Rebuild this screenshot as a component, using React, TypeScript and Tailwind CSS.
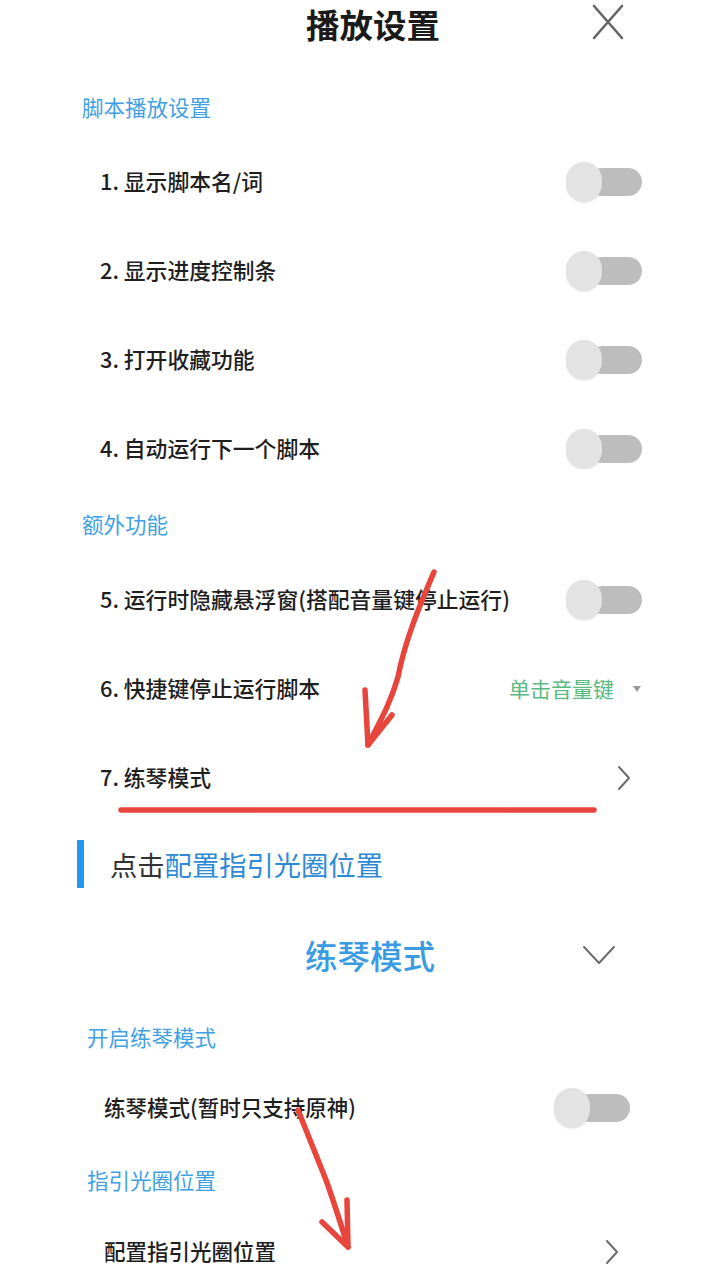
import React from "react";

const FONT = { fontFamily: '"Noto Sans CJK SC", "Noto Sans", sans-serif' };

function Toggle() {
  return (
    <div className="relative h-[42px] w-[76px]">
      <div className="absolute left-[22px] top-[7px] h-[28px] w-[54px] rounded-full bg-[#bdbdbd]" />
      <div className="absolute left-0 top-[1px] h-[40px] w-[36px] rounded-full bg-[#e3e3e3] shadow-[0_1px_2px_rgba(0,0,0,0.08)]" />
    </div>
  );
}

function ChevronRight() {
  return (
    <svg width="16" height="28" viewBox="0 0 16 28" fill="none">
      <path d="M3 3 L13 14 L3 25" stroke="#6b6b6b" strokeWidth="2" strokeLinecap="round" strokeLinejoin="round" />
    </svg>
  );
}

function SectionLabel({ children, pl }: { children: React.ReactNode; pl: string }) {
  return (
    <div className={`flex h-[40px] items-center text-[21.5px] text-[#3fa1e3] ${pl}`}>{children}</div>
  );
}

function Row({
  children,
  right,
  pl,
  pr,
  size = "text-[21.8px]",
}: {
  children: React.ReactNode;
  right: React.ReactNode;
  pl: string;
  pr: string;
  size?: string;
}) {
  return (
    <div className={`flex h-[89px] items-center justify-between ${pl} ${pr}`}>
      <div className={`${size} font-medium text-[#1e1e1e] whitespace-nowrap`}>{children}</div>
      {right}
    </div>
  );
}

export default function App() {
  return (
    <div className="relative h-[1280px] w-[720px] overflow-hidden bg-white" style={FONT}>
      {/* Header */}
      <div className="relative flex h-[46px] items-center justify-center pt-[2px]">
        <div className="ml-[26px] text-[33.5px] font-bold leading-[42px] text-[#1a1a1a]">播放设置</div>
        <svg className="absolute left-[590px] top-[4px]" width="36" height="36" viewBox="0 0 36 36" fill="none">
          <path d="M4 2 L32 34 M32 2 L4 34" stroke="#666" strokeWidth="2.6" strokeLinecap="round" />
        </svg>
      </div>

      <div className="mt-[41px]">
        <SectionLabel pl="pl-[82px]">脚本播放设置</SectionLabel>
      </div>
      <div className="mt-[10px]">
        <Row pl="pl-[100px]" pr="pr-[78px]" right={<Toggle />}>1.&nbsp;显示脚本名/词</Row>
        <Row pl="pl-[100px]" pr="pr-[78px]" right={<Toggle />}>2.&nbsp;显示进度控制条</Row>
        <Row pl="pl-[100px]" pr="pr-[78px]" right={<Toggle />}>3.&nbsp;打开收藏功能</Row>
        <Row pl="pl-[100px]" pr="pr-[78px]" right={<Toggle />}>4.&nbsp;自动运行下一个脚本</Row>
      </div>

      <div className="mt-[11px]">
        <SectionLabel pl="pl-[82px]">额外功能</SectionLabel>
      </div>
      <div className="mt-[11px]">
        <Row pl="pl-[100px]" pr="pr-[78px]" right={<Toggle />}>5.&nbsp;运行时隐藏悬浮窗(搭配音量键停止运行)</Row>
        <Row
          pl="pl-[100px]"
          pr="pr-[78px]"
          right={
            <div className="flex items-center gap-[18px]">
              <span className="text-[21px] text-[#5bb982]">单击音量键</span>
              <svg width="10" height="8" viewBox="0 0 10 8">
                <path d="M1 1 L9 1 L5 7 Z" fill="#9a9a9a" />
              </svg>
            </div>
          }
        >
          6.&nbsp;快捷键停止运行脚本
        </Row>
        <Row pl="pl-[100px]" pr="pr-[88px]" right={<ChevronRight />}>7.&nbsp;练琴模式</Row>
      </div>

      {/* Tip */}
      <div className="mt-[18px] flex h-[48px] items-center pl-[77px]">
        <div className="h-[48px] w-[7px] rounded-[1px] bg-[#2196f3]" />
        <div className="ml-[26px] text-[27.3px] text-[#333]">
          点击<span className="text-[#2f8ad6]">配置指引光圈位置</span>
        </div>
      </div>

      {/* Sub page */}
      <div className="relative mt-[37px] flex h-[60px] items-center justify-center">
        <div className="ml-[20px] text-[32.5px] font-medium text-[#3a9be2]">练琴模式</div>
        <svg className="absolute left-[582px] top-[18px]" width="34" height="24" viewBox="0 0 34 24" fill="none">
          <path d="M2 4 L17 20 L32 4" stroke="#6b6b6b" strokeWidth="2" strokeLinecap="round" strokeLinejoin="round" />
        </svg>
      </div>

      <div className="mt-[32px]">
        <SectionLabel pl="pl-[87px]">开启练琴模式</SectionLabel>
      </div>
      <div className="mt-[6px]">
        <Row pl="pl-[104px]" pr="pr-[90px]" size="text-[21.5px]" right={<Toggle />}>练琴模式(暂时只支持原神)</Row>
      </div>
      <div className="mt-[8px]">
        <SectionLabel pl="pl-[87px]">指引光圈位置</SectionLabel>
      </div>
      <div className="mt-[7px]">
        <Row pl="pl-[104px]" pr="pr-[100px]" size="text-[21.5px]" right={<ChevronRight />}>配置指引光圈位置</Row>
      </div>

      {/* Red annotations */}
      <svg className="pointer-events-none absolute left-0 top-0" width="720" height="1280" viewBox="0 0 720 1280" fill="none">
        <g stroke="#e8463c" strokeWidth="5.5" strokeLinecap="round" strokeLinejoin="round">
          <path d="M434 572 C420 605 405 640 398 677 C390 705 378 725 368 745" />
          <path d="M365 690 L368 745 L392 715" />
          <path d="M121 810 L594 810" />
          <path d="M298 1110 C308 1135 318 1160 326 1180 C335 1205 342 1228 348 1247" />
          <path d="M347 1200 L348 1247 L322 1222" />
        </g>
      </svg>
    </div>
  );
}
